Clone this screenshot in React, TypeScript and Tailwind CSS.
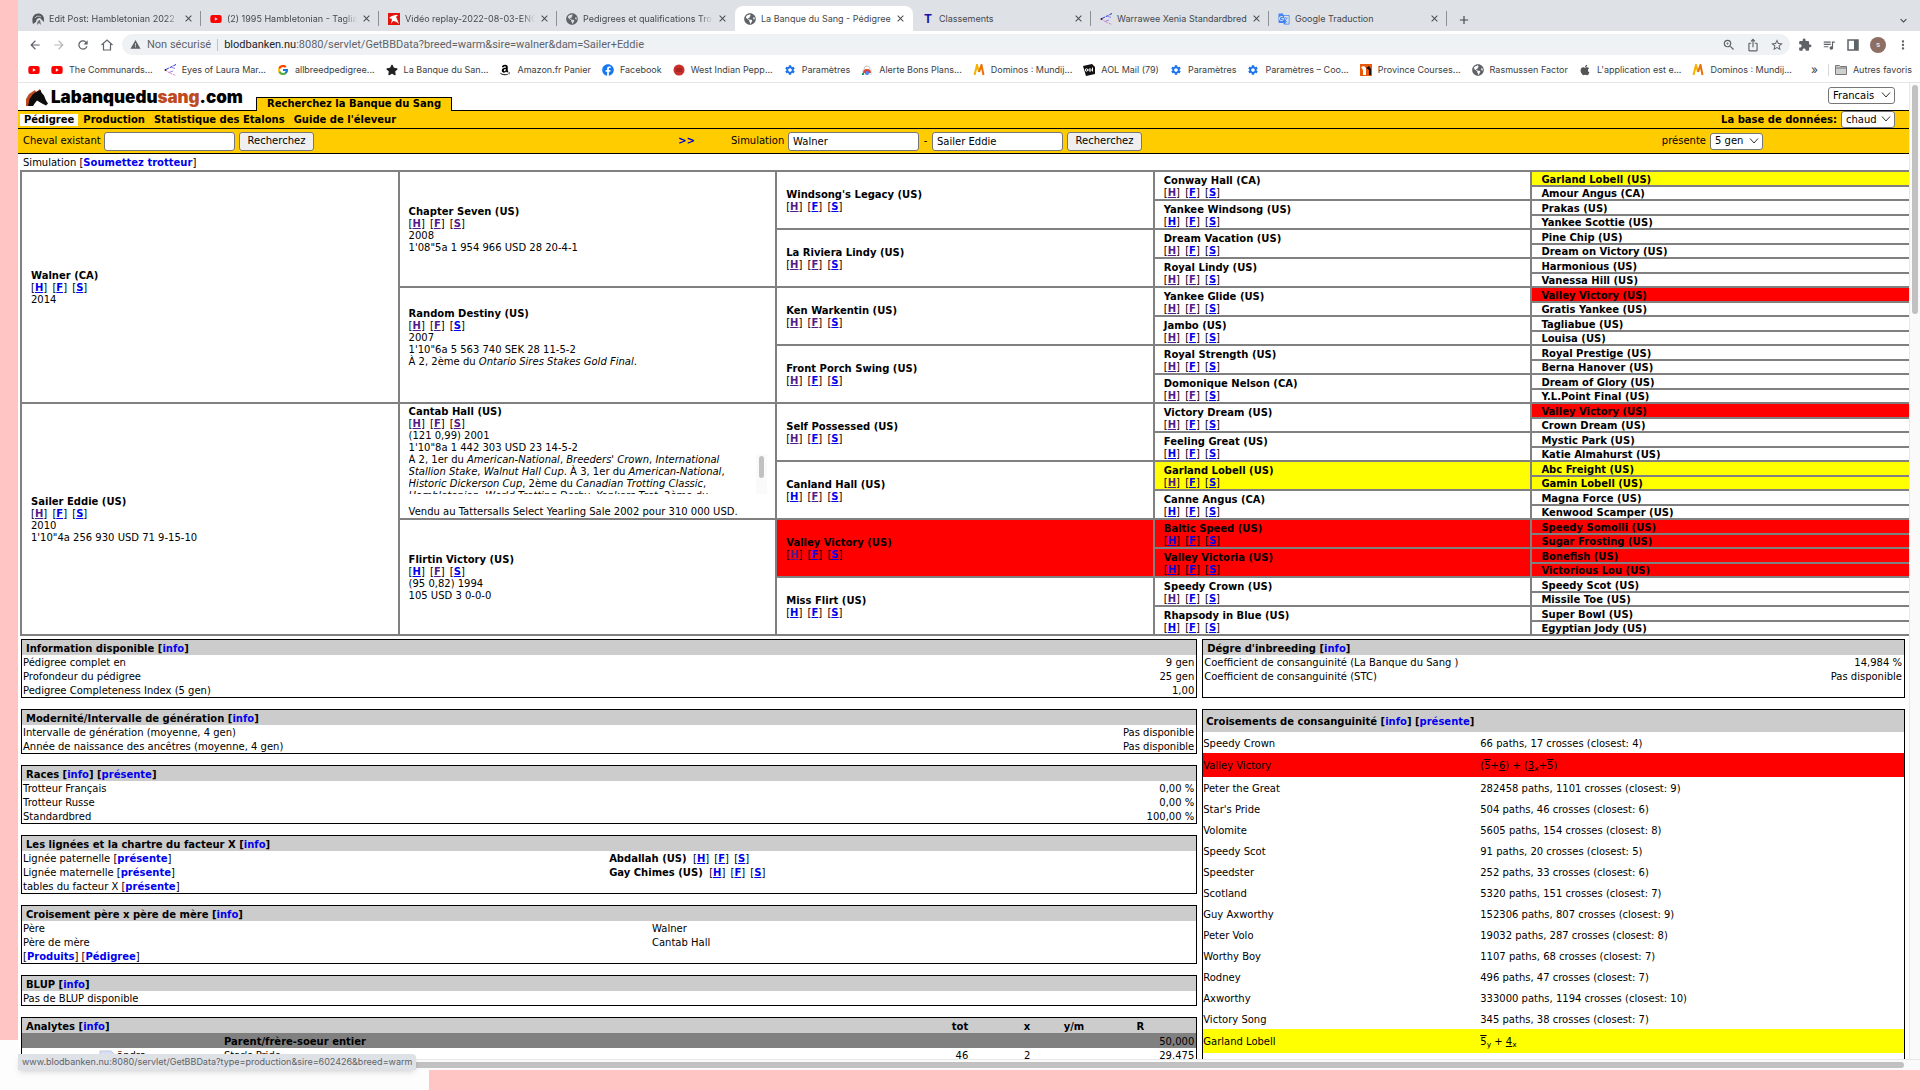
import React from 'react';
import { FaYoutube, FaFacebook, FaStar, FaAmazon, FaApple, FaGlobeAmericas } from 'react-icons/fa';
import { FcGoogle } from 'react-icons/fc';
import {
  MdArrowBack,
  MdArrowForward,
  MdRefresh,
  MdWarning,
  MdZoomIn,
  MdIosShare,
  MdStarBorder,
  MdExtension,
  MdQueueMusic,
  MdMoreVert,
  MdSettings,
  MdClose,
  MdAdd,
  MdExpandMore,
  MdGTranslate,
} from 'react-icons/md';

type Tone = 'red' | 'yellow';

interface Horse {
  name: string;
  // one letter per link, v = visited, n = new
  links?: string;
  tone?: Tone;
  details?: React.ReactNode;
}

const toneClass: Record<Tone, string> = {
  red: 'bg-[#ff0000]',
  yellow: 'bg-[#ffff00]',
};

const gen1: Horse[] = [
  { name: 'Walner (CA)', links: 'nnn', details: <p>2014</p> },
  {
    name: 'Sailer Eddie (US)',
    links: 'vnn',
    details: (
      <>
        <p>2010</p>
        <p>1'10"4a 256 930 USD 71 9-15-10</p>
      </>
    ),
  },
];

const gen2: Horse[] = [
  {
    name: 'Chapter Seven (US)',
    links: 'vvv',
    details: (
      <>
        <p>2008</p>
        <p>1'08"5a 1 954 966 USD 28 20-4-1</p>
      </>
    ),
  },
  {
    name: 'Random Destiny (US)',
    links: 'vvn',
    details: (
      <>
        <p>2007</p>
        <p>1'10"6a 5 563 740 SEK 28 11-5-2</p>
        <p className="pb-4">
          À 2, 2ème du <i>Ontario Sires Stakes Gold Final</i>.
        </p>
      </>
    ),
  },
  {
    name: 'Cantab Hall (US)',
    links: 'vvv',
    details: (
      <>
        <p>(121 0,99) 2001</p>
        <p>1'10"8a 1 442 303 USD 23 14-5-2</p>
        <div className="flex h-10 overflow-hidden">
          <p className="flex-1 pr-4">
            À 2, 1er du <i>American-National</i>, <i>Breeders' Crown</i>, <i>International Stallion Stake</i>,{' '}
            <i>Walnut Hall Cup</i>. À 3, 1er du <i>American-National</i>, <i>Historic Dickerson Cup</i>, 2ème du{' '}
            <i>Canadian Trotting Classic</i>, <i>Hambletonian</i>, <i>World Trotting Derby</i>, <i>Yonkers Trot</i>, 3ème du
          </p>
          <div className="mr-2 flex w-[11px] justify-center bg-[#fafafa] pt-0.5">
            <div className="h-[22px] w-[5px] rounded-full bg-[#c1c1c1]" />
          </div>
        </div>
        <p className="mt-3">Vendu au Tattersalls Select Yearling Sale 2002 pour 310 000 USD.</p>
      </>
    ),
  },
  {
    name: 'Flirtin Victory (US)',
    links: 'nvn',
    details: (
      <>
        <p>(95 0,82) 1994</p>
        <p>105 USD 3 0-0-0</p>
      </>
    ),
  },
];

const gen3: Horse[] = [
  { name: "Windsong's Legacy (US)", links: 'vnn' },
  { name: 'La Riviera Lindy (US)', links: 'vvn' },
  { name: 'Ken Warkentin (US)', links: 'vvn' },
  { name: 'Front Porch Swing (US)', links: 'vnn' },
  { name: 'Self Possessed (US)', links: 'vnn' },
  { name: 'Canland Hall (US)', links: 'nvn' },
  { name: 'Valley Victory (US)', links: 'vnn', tone: 'red' },
  { name: 'Miss Flirt (US)', links: 'nnn' },
];

const gen4: Horse[] = [
  { name: 'Conway Hall (CA)', links: 'vnn' },
  { name: 'Yankee Windsong (US)', links: 'nnn' },
  { name: 'Dream Vacation (US)', links: 'vnn' },
  { name: 'Royal Lindy (US)', links: 'vvn' },
  { name: 'Yankee Glide (US)', links: 'vvn' },
  { name: 'Jambo (US)', links: 'vnn' },
  { name: 'Royal Strength (US)', links: 'vnn' },
  { name: 'Domonique Nelson (CA)', links: 'vvn' },
  { name: 'Victory Dream (US)', links: 'vnn' },
  { name: 'Feeling Great (US)', links: 'nnn' },
  { name: 'Garland Lobell (US)', links: 'vnn', tone: 'yellow' },
  { name: 'Canne Angus (CA)', links: 'nnn' },
  { name: 'Baltic Speed (US)', links: 'nnn', tone: 'red' },
  { name: 'Valley Victoria (US)', links: 'nnn', tone: 'red' },
  { name: 'Speedy Crown (US)', links: 'vnn' },
  { name: 'Rhapsody in Blue (US)', links: 'nnn' },
];

const gen5: Horse[] = [
  { name: 'Garland Lobell (US)', tone: 'yellow' },
  { name: 'Amour Angus (CA)' },
  { name: 'Prakas (US)' },
  { name: 'Yankee Scottie (US)' },
  { name: 'Pine Chip (US)' },
  { name: 'Dream on Victory (US)' },
  { name: 'Harmonious (US)' },
  { name: 'Vanessa Hill (US)' },
  { name: 'Valley Victory (US)', tone: 'red' },
  { name: 'Gratis Yankee (US)' },
  { name: 'Tagliabue (US)' },
  { name: 'Louisa (US)' },
  { name: 'Royal Prestige (US)' },
  { name: 'Berna Hanover (US)' },
  { name: 'Dream of Glory (US)' },
  { name: 'Y.L.Point Final (US)' },
  { name: 'Valley Victory (US)', tone: 'red' },
  { name: 'Crown Dream (US)' },
  { name: 'Mystic Park (US)' },
  { name: 'Katie Almahurst (US)' },
  { name: 'Abc Freight (US)', tone: 'yellow' },
  { name: 'Gamin Lobell (US)', tone: 'yellow' },
  { name: 'Magna Force (US)' },
  { name: 'Kenwood Scamper (US)' },
  { name: 'Speedy Somolli (US)', tone: 'red' },
  { name: 'Sugar Frosting (US)', tone: 'red' },
  { name: 'Bonefish (US)', tone: 'red' },
  { name: 'Victorious Lou (US)', tone: 'red' },
  { name: 'Speedy Scot (US)' },
  { name: 'Missile Toe (US)' },
  { name: 'Super Bowl (US)' },
  { name: 'Egyptian Jody (US)' },
];

const generations = [gen1, gen2, gen3, gen4, gen5];

const crosses: { name: string; value: React.ReactNode; tone?: Tone }[] = [
  { name: 'Speedy Crown', value: '66 paths, 17 crosses (closest: 4)' },
  {
    name: 'Valley Victory',
    tone: 'red',
    value: (
      <>
        (<span className="overline">5</span>+<u>6</u>) + (<u>3</u>
        <sub>x</sub>+<span className="overline">5</span>)
      </>
    ),
  },
  { name: 'Peter the Great', value: '282458 paths, 1101 crosses (closest: 9)' },
  { name: "Star's Pride", value: '504 paths, 46 crosses (closest: 6)' },
  { name: 'Volomite', value: '5605 paths, 154 crosses (closest: 8)' },
  { name: 'Speedy Scot', value: '91 paths, 20 crosses (closest: 5)' },
  { name: 'Speedster', value: '252 paths, 33 crosses (closest: 6)' },
  { name: 'Scotland', value: '5320 paths, 151 crosses (closest: 7)' },
  { name: 'Guy Axworthy', value: '152306 paths, 807 crosses (closest: 9)' },
  { name: 'Peter Volo', value: '19032 paths, 287 crosses (closest: 8)' },
  { name: 'Worthy Boy', value: '1107 paths, 68 crosses (closest: 7)' },
  { name: 'Rodney', value: '496 paths, 47 crosses (closest: 7)' },
  { name: 'Axworthy', value: '333000 paths, 1194 crosses (closest: 10)' },
  { name: 'Victory Song', value: '345 paths, 38 crosses (closest: 7)' },
  {
    name: 'Garland Lobell',
    tone: 'yellow',
    value: (
      <>
        <span className="overline">5</span>
        <sub>y</sub> + <u>4</u>
        <sub>x</sub>
      </>
    ),
  },
];

const Globe = () => <FaGlobeAmericas className="text-[#5f6368]" />;

const PedigreeMark = () => (
  <svg viewBox="0 0 12 12" className="h-3 w-3" fill="none" strokeWidth="1">
    <path d="M12 .5 7 3 4 4.500 1 6" stroke="#2a2ae0" strokeDasharray="3 1" />
    <path d="M1 6l4 2.500L8 10l4 1.500" stroke="#e87fd0" strokeDasharray="2 1" />
    <path d="M7 3l4 1.500M5 8.500l4-1.500" stroke="#8a8aea" />
    <circle cx="1.500" cy="6" r="1" fill="#222" />
  </svg>
);

const Replay = () => (
  <svg viewBox="0 0 12 12" className="h-3 w-3">
    <rect width="12" height="12" fill="#e3130d" />
    <path d="M1 5c3-3 6-3 9-3L8 4c1 2 2 4 3 7-2-2-4-3-6-3l-2 3 1-5z" fill="#fff" />
  </svg>
);

const Bolt = () => (
  <svg viewBox="0 0 12 12" className="h-3 w-3">
    <path d="M1 11C-1 5 2 .5 6 .5c4 0 6 2.500 6 6.500v2L9.500 6.500 8 5C5 5 4 7 4 9z" fill="#55585c" />
    <path d="M5 12c0-3 1-5 3-5l1 5-2-2z" fill="#6d7175" />
    <path d="M3 5c1-2 4-2.500 6-1" stroke="#dee1e6" fill="none" strokeWidth=".8" />
  </svg>
);

const Pepper = () => (
  <svg viewBox="0 0 12 12" className="h-3 w-3">
    <circle cx="6" cy="6" r="5.500" fill="#c9302c" />
    <path d="M3 5h6M3 7h6" stroke="#7d1512" strokeWidth=".8" />
  </svg>
);

const Alert = () => (
  <svg viewBox="0 0 12 12" className="h-3 w-3">
    <path d="M3 5a3 3 0 0 1 6 0" fill="none" stroke="#c9c9c9" />
    <path d="M1 5h10v6H1z" fill="#e8e8e8" />
    <path d="M2 9a4 4 0 0 1 8 0z" fill="#db4437" />
    <circle cx="6" cy="9" r="2" fill="#4285f4" />
    <path d="M1 9h2v2H1z" fill="#0f9d58" />
  </svg>
);

const MLogo = () => (
  <svg viewBox="0 0 12 12" className="h-3 w-3" fill="none" strokeWidth="2">
    <path d="M1.500 11 4 1l2 7" stroke="#f4b400" />
    <path d="M6 8l2.500-7L10.500 11" stroke="#e8710a" />
  </svg>
);

const Aol = () => (
  <svg viewBox="0 0 12 12" className="h-3 w-3">
    <path d="M0 2 9 0l3 3v7l-9 2z" fill="#111" />
    <circle cx="3.500" cy="6" r="1.200" fill="none" stroke="#fff" />
    <circle cx="7" cy="6" r="1.200" fill="none" stroke="#fff" />
    <path d="M9.500 3.500v4" stroke="#fff" />
  </svg>
);

const Province = () => (
  <svg viewBox="0 0 12 12" className="h-3 w-3">
    <rect width="12" height="12" fill="#e8590c" />
    <path d="M1 3l3-1 2 2v7H3V6z" fill="#fff" />
    <path d="M6 4l3-2 2 3v6H9V6z" fill="#111" />
  </svg>
);

const Gear = () => <MdSettings className="text-[#1a73e8]" />;

const browserTabs = [
  { title: 'Edit Post: Hambletonian 2022 -', icon: <Bolt />, cut: true },
  { title: '(2) 1995 Hambletonian - Taglia', icon: <FaYoutube className="text-[#f00]" />, cut: true },
  { title: 'Vidéo replay-2022-08-03-ENG', icon: <Replay />, cut: true },
  { title: 'Pedigrees et qualifications Trot', icon: <Globe />, cut: true },
  { title: 'La Banque du Sang - Pédigree', icon: <Globe />, active: true },
  { title: 'Classements', icon: <b className="font-[Inter] text-xs text-[#1a0dab]">T</b> },
  { title: 'Warrawee Xenia Standardbred', icon: <PedigreeMark /> },
  { title: 'Google Traduction', icon: <MdGTranslate className="text-[#4285f4]" /> },
];

const bookmarks = [
  { title: '', icon: <FaYoutube className="text-[#f00]" /> },
  { title: 'The Communards...', icon: <FaYoutube className="text-[#f00]" /> },
  { title: 'Eyes of Laura Mar...', icon: <PedigreeMark /> },
  { title: 'allbreedpedigree...', icon: <FcGoogle /> },
  { title: 'La Banque du San...', icon: <FaStar className="text-[#222]" /> },
  { title: 'Amazon.fr Panier', icon: <FaAmazon className="text-black" /> },
  { title: 'Facebook', icon: <FaFacebook className="text-[#1877f2]" /> },
  { title: 'West Indian Pepp...', icon: <Pepper /> },
  { title: 'Paramètres', icon: <Gear /> },
  { title: 'Alerte Bons Plans...', icon: <Alert /> },
  { title: 'Dominos : Mundij...', icon: <MLogo /> },
  { title: 'AOL Mail (79)', icon: <Aol /> },
  { title: 'Paramètres', icon: <Gear /> },
  { title: 'Paramètres – Coo...', icon: <Gear /> },
  { title: 'Province Courses...', icon: <Province /> },
  { title: 'Rasmussen Factor', icon: <Globe /> },
  { title: "L'application est e...", icon: <FaApple className="text-[#555]" /> },
  { title: 'Dominos : Mundij...', icon: <MLogo /> },
];

const TabStrip = () => (
  <div className="flex h-[31px] items-end bg-[#dee1e6] pl-[5px] text-[#45494d]">
    {browserTabs.map((tab, i) => {
      const divider = !tab.active && !browserTabs[i + 1]?.active;
      return (
        <div
          key={tab.title}
          className={`flex h-[25px] w-[178px] items-center pl-[9px] ${tab.active ? 'rounded-t-lg bg-white' : ''}`}
        >
          <span className="mr-[5px] flex w-3 shrink-0 justify-center text-xs">{tab.icon}</span>
          <span
            className={`w-[130px] whitespace-nowrap ${
              tab.cut ? '[mask-image:linear-gradient(to_right,black_90%,transparent)]' : ''
            }`}
          >
            {tab.title}
          </span>
          <button aria-label="Fermer l'onglet" className="ml-1 text-[11px]">
            <MdClose />
          </button>
          {divider && <span className="ml-auto h-[15px] w-px bg-[#8e9196]" />}
        </div>
      );
    })}
    <button aria-label="Nouvel onglet" className="mb-1 ml-2.5 text-sm">
      <MdAdd />
    </button>
    <button aria-label="Rechercher des onglets" className="mr-2.5 mb-1 ml-auto text-[13px]">
      <MdExpandMore />
    </button>
  </div>
);

const Toolbar = () => (
  <div className="flex h-[29px] items-center bg-white pr-2.5 pb-0.5 pl-2.5 text-sm text-[#5f6368]">
    <div className="flex w-[94px] gap-2.5">
      <button aria-label="Retour"><MdArrowBack /></button>
      <button aria-label="Suivant" className="text-[#b5b8bb]"><MdArrowForward /></button>
      <button aria-label="Actualiser"><MdRefresh /></button>
      <button aria-label="Accueil">
        <svg viewBox="0 0 14 14" className="h-3.5 w-3.5" fill="none" stroke="#5f6368" strokeWidth="1.200">
          <path d="M1.500 7 7 2l5.500 5M3.500 6v6h7V6" />
        </svg>
      </button>
    </div>
    <div className="mr-2 flex h-[21px] flex-1 items-center rounded-full bg-[#eff2f5] pr-1.5 pl-2 text-[11px]">
      <MdWarning className="mr-1.5" />
      <span>Non sécurisé</span>
      <span className="mx-1.5 h-3 w-px bg-[#c0c3c7]" />
      <span className="flex-1">
        <span className="text-[#202124]">blodbanken.nu</span>:8080/servlet/GetBBData?breed=warm&sire=walner&dam=Sailer+Eddie
      </span>
      <div className="flex gap-2.5 text-sm">
        <button aria-label="Zoom"><MdZoomIn /></button>
        <button aria-label="Partager"><MdIosShare /></button>
        <button aria-label="Ajouter aux favoris"><MdStarBorder /></button>
      </div>
    </div>
    <div className="flex items-center gap-2.5">
      <button aria-label="Extensions"><MdExtension /></button>
      <button aria-label="Contrôle multimédia"><MdQueueMusic /></button>
      <button aria-label="Panneau latéral">
        <svg viewBox="0 0 14 14" className="h-3.5 w-3.5">
          <path d="M2 2h10v10H2z" fill="none" stroke="#5f6368" strokeWidth="1.500" />
          <path d="M8 2h4v10H8z" fill="#5f6368" />
        </svg>
      </button>
      <button className="flex h-4 w-4 items-center justify-center rounded-full bg-[#8d6e63] text-[8px] text-white">s</button>
      <button aria-label="Menu"><MdMoreVert /></button>
    </div>
  </div>
);

const BookmarkBar = () => (
  <div className="flex h-[23px] items-center border-b border-[#e4e6e8] bg-white pr-2 pb-0.5 pl-2.5 text-[#3c4043]">
    <nav className="flex flex-1 gap-[11px]">
      {bookmarks.map((b, i) => (
        <a key={i} href="#" className="flex items-center gap-1.5 whitespace-nowrap">
          <span className="flex w-3 justify-center text-xs">{b.icon}</span>
          {b.title}
        </a>
      ))}
    </nav>
    <button aria-label="Autres" className="mr-2.5 text-xs">»</button>
    <span className="mr-1.5 h-3 w-px bg-[#d5d7da]" />
    <a href="#" className="flex items-center gap-1.5">
      <svg viewBox="0 0 12 10" className="h-2.5 w-3">
        <path d="M.5 .5h4l1 1h6v8H.5z" fill="#d0d0d0" stroke="#777" />
        <path d="M.5 3h11" stroke="#777" />
      </svg>
      Autres favoris
    </a>
  </div>
);

const Select = ({ label, value, width }: { label: string; value: string; width: string }) => (
  <span className="relative inline-flex">
    <select
      aria-label={label}
      defaultValue={value}
      className={`h-[17px] appearance-none rounded-[3px] border border-[#767676] bg-white pl-1 text-[10px] leading-[12px] ${width}`}
    >
      <option>{value}</option>
    </select>
    <svg viewBox="0 0 10 6" className="pointer-events-none absolute top-[5px] right-1 h-1.5 w-2.5" fill="none" stroke="#333">
      <path d="M1 .5l4 4.500 4-4.500" />
    </svg>
  </span>
);

const inputClass = 'h-[19px] w-[131px] rounded-[3px] border border-[#767676] bg-white px-1';
const buttonClass = 'h-[19px] w-[75px] rounded-[3px] border border-[#767676] bg-[#efefef]';

const SiteHeader = () => (
  <header>
    <div className="flex h-7 items-end justify-between border-b border-black">
      <div className="flex items-end">
        <a href="#" className="mr-[15px] mb-[3px] ml-2 flex h-5 w-[215px] items-center">
          <svg viewBox="0 0 22 17" className="mr-[3px] h-[17px] w-[22px] shrink-0">
            <path d="M0 17 0 10 3 5l6-4 1 2 4-3 1 3-8 3-3 6-1 5z" fill="#c04a1e" />
            <path d="M2 17 3.500 10 7 5l4-2.500L14.500 1l1 2.500 2.500 3 2 5 2 3-2 2-4-2-5-3-2 2.500-2 3z" fill="#0c0c0c" />
          </svg>
          <span className="font-[Inter] text-[17px] leading-5 font-black text-black">
            Labanquedu<span className="text-[#bf4a22]">sang</span>.com
          </span>
        </a>
        <div className="-mb-px h-[14px] border border-b-0 border-black bg-[#ffcc00] px-2.5 font-bold">
          Recherchez la Banque du Sang
        </div>
      </div>
      <div className="mr-3.5 mb-1.5">
        <Select label="Langue" value="Francais" width="w-[67px]" />
      </div>
    </div>
    <div className="flex h-[18px] items-center border-b border-black bg-[#ffcc00] pr-3.5 pl-0.5 font-bold">
      <nav className="flex flex-1 gap-px">
        <a href="#" className="bg-white px-1">Pédigree</a>
        <a href="#" className="px-1">Production</a>
        <a href="#" className="px-1">Statistique des Etalons</a>
        <a href="#" className="px-1">Guide de l'éleveur</a>
      </nav>
      <span className="mr-1">La base de données:</span>
      <span className="font-normal">
        <Select label="La base de données" value="chaud" width="w-[54px]" />
      </span>
    </div>
    <form className="flex h-[25px] items-center border-b border-black bg-[#ffcc00] pl-[5px]">
      <label htmlFor="existing" className="w-[81px]">Cheval existant</label>
      <input id="existing" className={inputClass} />
      <button type="button" className={`ml-1 ${buttonClass}`}>Recherchez</button>
      <a href="#" className="ml-[364px] w-[53px] font-bold text-[#0000cc]">&gt;&gt;</a>
      <label htmlFor="sire" className="w-[57px]">Simulation</label>
      <input id="sire" defaultValue="Walner" className={inputClass} />
      <span className="w-[13px] text-center">-</span>
      <input aria-label="Mère" defaultValue="Sailer Eddie" className={inputClass} />
      <button type="button" className={`ml-1 ${buttonClass}`}>Recherchez</button>
      <div className="mr-[146px] ml-auto flex items-center gap-1">
        <span>présente</span>
        <Select label="Générations" value="5 gen" width="w-[53px]" />
      </div>
    </form>
  </header>
);

const BlueLink = ({ children }: { children: React.ReactNode }) => (
  <a href="#" className="font-bold text-[#0000ee]">{children}</a>
);

const HorseLinks = ({ links }: { links: string }) => (
  <span>
    {['H', 'F', 'S'].map((letter, i) => (
      <React.Fragment key={letter}>
        <span className="mr-0.5">
          [
          <a href="#" className={`font-bold underline ${links[i] === 'v' ? 'text-[#551a8b]' : 'text-[#0000ee]'}`}>
            {letter}
          </a>
          ]
        </span>{' '}
      </React.Fragment>
    ))}
  </span>
);

const PedigreeTable = () => (
  <table className="w-full table-fixed border-collapse border-2 border-r-0 border-[#808080]">
    <tbody>
      {gen5.map((_, row) => (
        <tr key={row} className="h-[14px] odd:h-[15px]">
          {generations.map((gen, g) => {
            const span = 16 >> g;
            if (row % span !== 0) return null;
            const horse = gen[row / span];
            return (
              <td
                key={g}
                rowSpan={span}
                className={`border-2 border-[#808080] p-0 pt-0.5 pl-[9px] align-middle last:border-r-0 ${
                  horse.tone ? toneClass[horse.tone] : ''
                }`}
              >
                <p className={`font-bold ${horse.links ? '' : 'leading-[10px]'}`}>{horse.name}</p>
                {horse.links && <HorseLinks links={horse.links} />}
                {horse.details}
              </td>
            );
          })}
        </tr>
      ))}
    </tbody>
  </table>
);

interface PanelProps {
  title: string;
  links?: string[];
  rows: React.ReactNode[][];
  split?: string;
  right?: boolean;
}

const Panel = ({ title, links = ['info'], rows, split = 'w-1/2', right = false }: PanelProps) => (
  <table className="mb-[11px] w-full border-separate border-spacing-0 border border-black">
    <thead>
      <tr className="h-[15px] bg-[#cccccc]">
        <th colSpan={2} className="p-0 pt-0.5 pl-1 text-left">
          {title}
          {links.map((l) => (
            <React.Fragment key={l}>
              {' '}[<BlueLink>{l}</BlueLink>]
            </React.Fragment>
          ))}
        </th>
      </tr>
    </thead>
    <tbody>
      {rows.map((row, i) => (
        <tr key={i} className="h-[14px]">
          <td className={`p-0 pt-0.5 pl-px ${split}`}>{row[0]}</td>
          <td className={`p-0 pt-0.5 pr-0.5 ${right ? 'text-right' : ''}`}>{row[1]}</td>
        </tr>
      ))}
    </tbody>
  </table>
);

const Lineage = ({ name }: { name: string }) => (
  <>
    <b>{name}</b>&nbsp; <HorseLinks links="nnn" />
  </>
);

const Analytes = () => (
  <table className="w-full table-fixed border-separate border-spacing-0 border border-black">
    <colgroup>
      <col className="w-[202px]" />
      <col />
      <col className="w-[80px]" />
      <col className="w-[62px]" />
      <col className="w-[54px]" />
      <col className="w-[112px]" />
    </colgroup>
    <thead>
      <tr className="h-[15px] bg-[#cccccc]">
        <th colSpan={2} className="p-0 pt-0.5 pl-1 text-left">
          Analytes [<BlueLink>info</BlueLink>]
        </th>
        <th className="p-0 pt-0.5 text-right">tot</th>
        <th className="p-0 pt-0.5 text-right">x</th>
        <th className="p-0 pt-0.5 text-right">y/m</th>
        <th className="p-0 pt-0.5 pr-[52px] text-right">R</th>
      </tr>
    </thead>
    <tbody>
      <tr className="h-[15px] bg-[#808080]">
        <td className="p-0" />
        <td colSpan={4} className="p-0 pt-0.5 font-bold">Parent/frère-soeur entier</td>
        <td className="p-0 pt-0.5 pr-0.5 text-right">50,000</td>
      </tr>
      <tr className="h-[15px]">
        <td className="p-0 pl-[77px]">
          <span className="flex items-center">
            <svg viewBox="0 0 18 12" className="h-3 w-[18px]">
              <path d="M1 1h11l5 5v6H1z" fill="#d9defa" stroke="#c3c7d6" />
              <circle cx="7" cy="7" r="3" fill="#fff" />
            </svg>
            ändra
          </span>
        </td>
        <td className="p-0">Star's Pride</td>
        <td className="p-0 text-right">46</td>
        <td className="p-0 text-right">2</td>
        <td className="p-0" />
        <td className="p-0 pr-0.5 text-right">29.475</td>
      </tr>
    </tbody>
  </table>
);

const Crosses = () => (
  <table className="w-full border-separate border-spacing-0 border border-black">
    <thead>
      <tr className="h-[22px] bg-[#cccccc]">
        <th colSpan={2} className="p-0 pt-0.5 pl-[3px] text-left">
          Croisements de consanguinité [<BlueLink>info</BlueLink>] [<BlueLink>présente</BlueLink>]
        </th>
      </tr>
    </thead>
    <tbody>
      {crosses.map((c) => (
        <tr key={c.name} className={c.tone ? `h-6 ${toneClass[c.tone]}` : 'h-[21px]'}>
          <td className="w-[277px] p-0 pt-0.5">{c.name}</td>
          <td className="p-0 pt-0.5">{c.value}</td>
        </tr>
      ))}
      <tr className="h-[21px]">
        <td colSpan={2} />
      </tr>
    </tbody>
  </table>
);

const Page = () => (
  <div className="flex min-h-0 flex-1">
    <main className="min-w-0 flex-1 overflow-hidden bg-white font-['DejaVu_Sans',sans-serif] text-[10px] leading-[12px] text-black">
      <SiteHeader />
      <p className="h-4 pt-[3px] pl-[5px]">
        Simulation [<BlueLink>Soumettez trotteur</BlueLink>]
      </p>
      <div className="pl-0.5">
        <PedigreeTable />
      </div>
      <div className="mt-[3px] grid grid-cols-[626fr_374fr] gap-[5px] pr-1 pl-[3px]">
        <div>
          <Panel
            title="Information disponible"
            right
            rows={[
              ['Pédigree complet en', '9 gen'],
              ['Profondeur du pédigree', '25 gen'],
              ['Pedigree Completeness Index (5 gen)', '1,00'],
            ]}
          />
          <Panel
            title="Modernité/Intervalle de génération"
            right
            rows={[
              ['Intervalle de génération (moyenne, 4 gen)', 'Pas disponible'],
              ['Année de naissance des ancêtres (moyenne, 4 gen)', 'Pas disponible'],
            ]}
          />
          <Panel
            title="Races"
            links={['info', 'présente']}
            right
            rows={[
              ['Trotteur Français', '0,00 %'],
              ['Trotteur Russe', '0,00 %'],
              ['Standardbred', '100,00 %'],
            ]}
          />
          <Panel
            title="Les lignées et la chartre du facteur X"
            rows={[
              [<>Lignée paternelle [<BlueLink>présente</BlueLink>]</>, <Lineage name="Abdallah (US)" />],
              [<>Lignée maternelle [<BlueLink>présente</BlueLink>]</>, <Lineage name="Gay Chimes (US)" />],
              [<>tables du facteur X [<BlueLink>présente</BlueLink>]</>, ''],
            ]}
          />
          <Panel
            title="Croisement père x père de mère"
            split="w-[630px]"
            rows={[
              ['Père', 'Walner'],
              ['Père de mère', 'Cantab Hall'],
              [<>[<BlueLink>Produits</BlueLink>] [<BlueLink>Pédigree</BlueLink>]</>, ''],
            ]}
          />
          <Panel title="BLUP" rows={[['Pas de BLUP disponible', '']]} />
          <Analytes />
        </div>
        <div>
          <Panel
            title="Dégre d'inbreeding"
            right
            rows={[
              ['Coefficient de consanguinité (La Banque du Sang )', '14,984 %'],
              ['Coefficient de consanguinité (STC)', 'Pas disponible'],
              ['', ''],
            ]}
          />
          <Crosses />
        </div>
      </div>
    </main>
    <div className="flex w-[11px] justify-center border-l border-[#e8e8e8] bg-[#fafafa] pt-0.5">
      <div className="h-[229px] w-1.5 rounded-full bg-[#c1c1c1]" />
    </div>
  </div>
);

export default function App() {
  return (
    <div className="flex h-screen flex-col overflow-hidden bg-[#fdfdfd] font-[Inter,sans-serif] text-[9px]">
      <div className="flex min-h-0 flex-1">
        <div className="mb-[30px] w-[18px] shrink-0 bg-[#ffc4c4]" />
        <div className="relative flex min-w-0 flex-1 flex-col">
          <TabStrip />
          <div className="font-[Roboto,sans-serif]">
            <Toolbar />
          </div>
          <BookmarkBar />
          <Page />
          <div className="flex h-[11px] items-center border-t border-[#e8e8e8] bg-[#fafafa] pr-4">
            <div className="h-1.5 flex-1 rounded-full bg-[#c1c1c1]" />
          </div>
          <div className="absolute bottom-0 left-0 flex h-4 items-center rounded-tr-sm bg-[#dee1e6] px-1 text-[#5f6368] shadow-md">
            www.blodbanken.nu:8080/servlet/GetBBData?type=production&sire=602426&breed=warm
          </div>
        </div>
      </div>
      <div className="h-5 pl-[429px]">
        <div className="h-full bg-[#ffc4c4]" />
      </div>
    </div>
  );
}
